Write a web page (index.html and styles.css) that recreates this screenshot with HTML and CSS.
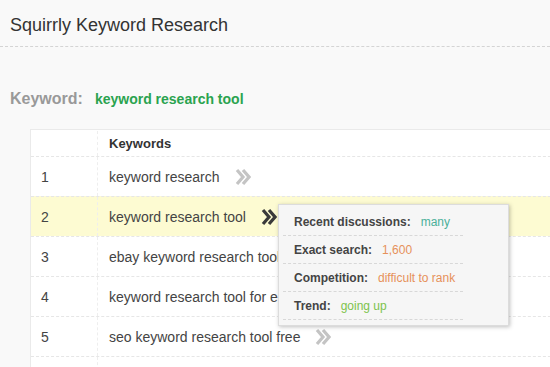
FILE: index.html
```html
<!DOCTYPE html>
<html>
<head>
<meta charset="utf-8">
<link rel="stylesheet" href="styles.css">
</head>
<body>
<div class="page">
  <h1 class="title">Squirrly Keyword Research</h1>
  <div class="kw-line"><span class="kw-label">Keyword:</span><span class="kw-value">keyword research tool</span></div>
  <div class="table">
    <div class="row head"><div class="num"></div><div class="kw">Keywords</div></div>
    <div class="row"><div class="num">1</div><div class="kw">keyword research<svg class="chev" viewBox="0 0 16 18"><path d="M2 2 L8 9 L2 16 M8 2 L14 9 L8 16" fill="none" stroke="currentColor" stroke-width="3.2"/></svg></div></div>
    <div class="row hl"><div class="num">2</div><div class="kw">keyword research tool<svg class="chev dark" viewBox="0 0 16 18"><path d="M2 2 L8 9 L2 16 M8 2 L14 9 L8 16" fill="none" stroke="currentColor" stroke-width="3.2"/></svg></div></div>
    <div class="row"><div class="num">3</div><div class="kw">ebay keyword research tool</div></div>
    <div class="row"><div class="num">4</div><div class="kw">keyword research tool for ebay</div></div>
    <div class="row"><div class="num">5</div><div class="kw">seo keyword research tool free<svg class="chev" viewBox="0 0 16 18"><path d="M2 2 L8 9 L2 16 M8 2 L14 9 L8 16" fill="none" stroke="currentColor" stroke-width="3.2"/></svg></div></div>
    <div class="row"><div class="num"></div><div class="kw"></div></div>
  </div>
  <div class="tip">
    <div class="tip-line"><b>Recent discussions:</b><span class="v many">many</span></div>
    <div class="tip-line"><b>Exact search:</b><span class="v orange">1,600</span></div>
    <div class="tip-line"><b>Competition:</b><span class="v orange">difficult to rank</span></div>
    <div class="tip-line"><b>Trend:</b><span class="v up">going up</span></div>
  </div>
</div>
</body>
</html>
```
FILE: styles.css
```css
html, body { margin: 0; padding: 0; background: #f9f9f9; }
body { font-family: Arial, "Liberation Sans", sans-serif; width: 550px; height: 367px; overflow: hidden; }
.page { position: relative; height: 367px; overflow: hidden; }
.title {
  margin: 0;
  padding: 14px 0 0 10px;
  height: 32px;
  font-size: 18px;
  font-weight: normal;
  color: #333;
  border-bottom: 1px dashed #d4d4d4;
  line-height: 22px;
}
.kw-line { padding: 43px 0 0 10px; height: 21px; display: flex; align-items: baseline; }
.kw-label { font-size: 16px; font-weight: bold; color: #999; margin-right: 12px; }
.kw-value { font-size: 14px; font-weight: bold; color: #2aa34f; }
.table {
  margin: 18px 0 0 30px;
  background: #fff;
  border-top: 1px solid #eaeaea;
  border-left: 1px solid #eaeaea;
  width: 540px;
}
.row { display: flex; height: 39px; border-top: 1px dashed #e6e6e6; align-items: center; font-size: 14px; color: #444; }
.row.head { height: 25px; border-top: none; font-weight: bold; color: #333; font-size: 13px; padding-top: 1px; }
.row.hl { background: #fdfbd2; }
.num { width: 67px; align-self: stretch; border-right: 1px dashed #eee; padding-left: 10px; box-sizing: border-box; display: flex; align-items: center; }
.kw { padding-left: 11px; display: flex; align-items: center; white-space: nowrap; }
.chev { width: 16px; height: 18px; margin-left: 15px; color: #c4c4c4; }
.chev.dark { color: #3a3a3a; }
.tip {
  position: absolute;
  left: 278px; top: 204px;
  width: 231px; height: 122px;
  background: #f6f6f6;
  border: 1px solid #dcdcdc;
  box-shadow: 1px 1px 4px rgba(0,0,0,0.25);
  padding: 3px 0 0 4px;
  box-sizing: border-box;
}
.tip-line {
  width: 180px;
  height: 28px;
  border-bottom: 1px dashed #d8d8d8;
  display: flex; align-items: center;
  padding-left: 11px;
  box-sizing: border-box;
  font-size: 12px;
}
.tip-line b { color: #444; margin-right: 10px; }
.v { font-size: 12px; }
.many { color: #4ab09a; }
.orange { color: #e6915a; }
.up { color: #7cc34c; }
```
